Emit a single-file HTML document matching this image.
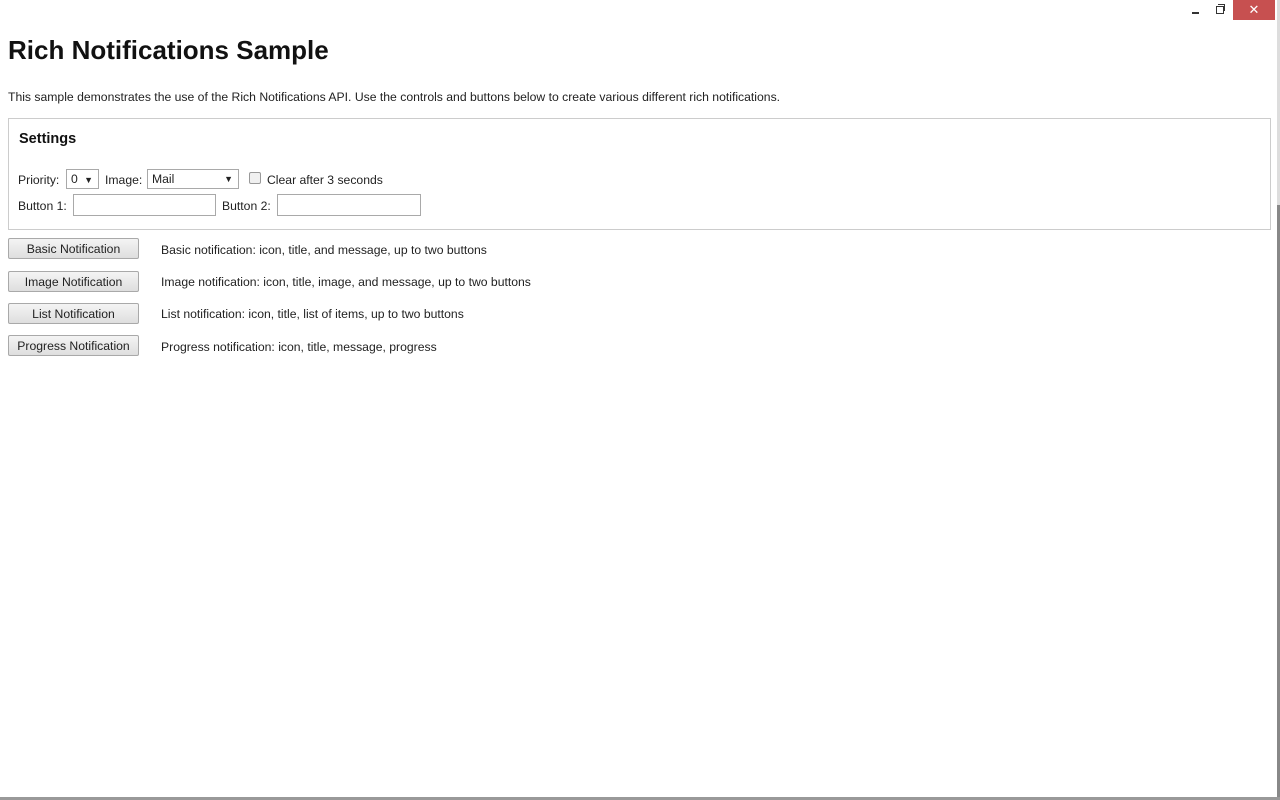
<!DOCTYPE html>
<html><head><style>
html,body{margin:0;padding:0;width:1280px;height:800px;overflow:hidden;background:#fff;font-family:"Liberation Sans",Arial,sans-serif;color:#222;}
.abs{position:absolute}
h1{position:absolute;left:8px;top:35px;margin:0;font-size:26px;font-weight:bold;color:#111;}
.t{font-size:12.2px;white-space:nowrap}
.box{position:absolute;left:8px;top:118px;width:1261px;height:110px;border:1px solid #ccc;}
.sel{position:absolute;border:1px solid #a9a9a9;height:20px;box-sizing:border-box;font-size:12.2px;padding:2px 4px;background:#fff;white-space:nowrap}
.inp{position:absolute;border:1px solid #a9a9a9;height:22px;box-sizing:border-box;background:#fff}
.btn{position:absolute;left:8px;width:131px;height:21px;box-sizing:border-box;border:1px solid #a9a9a9;border-radius:2px;background:linear-gradient(#f4f4f4,#dedede);font-size:12.2px;text-align:center;line-height:20px;color:#222;white-space:nowrap}
</style></head><body>
<div class="abs" style="left:1192px;top:12px;width:7px;height:2px;background:#333"></div>
<div class="abs" style="left:1216px;top:6px;width:6px;height:6px;border:1px solid #333"></div>
<div class="abs" style="left:1218px;top:4px;width:6px;height:6px;border-top:1px solid #333;border-right:1px solid #333"></div>
<div class="abs" style="left:1233px;top:0;width:42px;height:20px;background:#c75050;color:#fff;text-align:center;font-size:13px;line-height:20px">✕</div>
<div class="abs" style="left:1277px;top:0;width:3px;height:800px;background:#ddd"></div>
<div class="abs" style="left:1277px;top:205px;width:3px;height:595px;background:#888"></div>
<div class="abs" style="left:0;top:797px;width:1280px;height:3px;background:#999"></div>
<h1>Rich Notifications Sample</h1>
<div class="abs t" style="left:8px;top:90px">This sample demonstrates the use of the Rich Notifications API. Use the controls and buttons below to create various different rich notifications.</div>
<div class="box"></div>
<div class="abs" style="left:19px;top:131px;font-size:14.5px;font-weight:bold;color:#111">Settings</div>
<div class="abs t" style="left:18px;top:173px">Priority:</div>
<div class="sel" style="left:66px;top:169px;width:33px">0 <span style="font-size:9px;margin-left:3px">▼</span></div>
<div class="abs t" style="left:105px;top:173px">Image:</div>
<div class="sel" style="left:147px;top:169px;width:92px">Mail<span style="font-size:9px;position:absolute;right:5px;top:4px">▼</span></div>
<div class="abs" style="left:249px;top:172px;width:10px;height:10px;border:1px solid #999;border-radius:2px;background:#f0f0f0"></div>
<div class="abs t" style="left:267px;top:173px">Clear after 3 seconds</div>
<div class="abs t" style="left:18px;top:199px">Button 1:</div>
<div class="inp" style="left:73px;top:194px;width:143px"></div>
<div class="abs t" style="left:222px;top:199px">Button 2:</div>
<div class="inp" style="left:277px;top:194px;width:144px"></div>
<div class="btn" style="top:238px">Basic Notification</div>
<div class="abs t" style="left:161px;top:243px">Basic notification: icon, title, and message, up to two buttons</div>
<div class="btn" style="top:271px">Image Notification</div>
<div class="abs t" style="left:161px;top:275px">Image notification: icon, title, image, and message, up to two buttons</div>
<div class="btn" style="top:303px">List Notification</div>
<div class="abs t" style="left:161px;top:307px">List notification: icon, title, list of items, up to two buttons</div>
<div class="btn" style="top:335px">Progress Notification</div>
<div class="abs t" style="left:161px;top:340px">Progress notification: icon, title, message, progress</div>
</body></html>
